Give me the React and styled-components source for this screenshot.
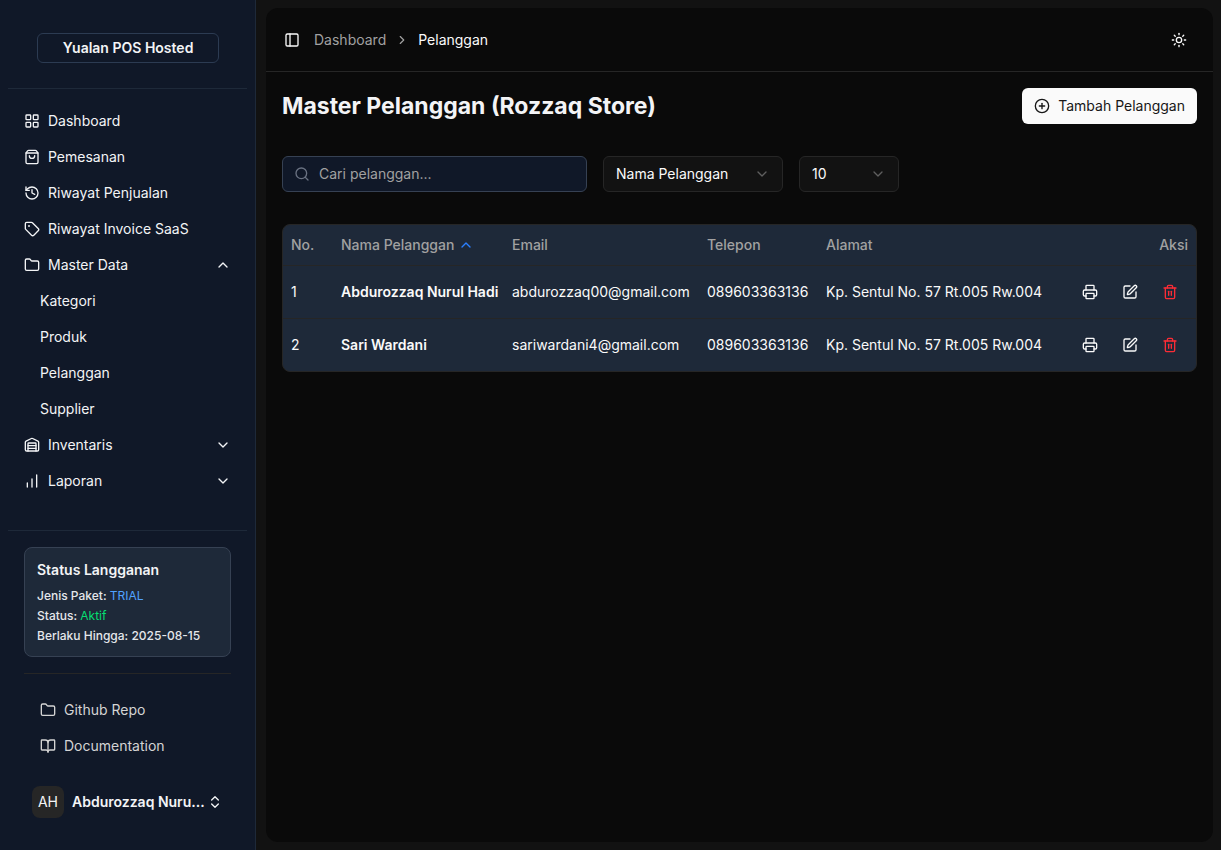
import React, { useState } from "react";
import styled, { createGlobalStyle } from "styled-components";
import {
  BookOpen,
  ChartNoAxesColumnIncreasing,
  ChevronDown,
  ChevronRight,
  ChevronsUpDown,
  ChevronUp,
  CirclePlus,
  Folder,
  History,
  LayoutGrid,
  PanelLeft,
  Printer,
  Search,
  ShoppingBag,
  SquarePen,
  Sun,
  Tag,
  Trash2,
  Warehouse,
} from "lucide-react";

const GlobalStyle = createGlobalStyle`
  :root {
    --color-page: #121212;
    --color-panel: #0a0a0a;
    --color-sidebar: #101828;
    --color-card: #1e2939;
    --color-line: #262626;
    --color-text: #fafafa;
    --color-muted: #a1a1a1;
    --color-blue: #2b7fff;
    --color-light-blue: #51a2ff;
    --color-green: #05df72;
    --color-red: #fb2c36;
  }
  * {
    box-sizing: border-box;
  }
  body {
    margin: 0;
    background: var(--color-page);
    color: var(--color-text);
    font-family: Inter, "Liberation Sans", sans-serif;
    font-size: 14px;
    line-height: 20px;
  }
  button, input, select {
    font: inherit;
    color: inherit;
  }
  button {
    cursor: pointer;
  }
  a {
    color: inherit;
    text-decoration: none;
  }
  svg {
    flex: none;
  }
`;

const Layout = styled.div`
  display: flex;
  min-height: 100vh;
`;

const Sidebar = styled.aside`
  display: flex;
  flex-direction: column;
  flex: none;
  width: 256px;
  padding: 8px;
  background: var(--color-sidebar);
  border-right: 1px solid var(--color-card);
  color: #f3f4f6;
`;

const SidebarHeader = styled.div`
  padding: 25px 28px 25px 29px;
  border-bottom: 1px solid var(--color-card);
`;

const Brand = styled.a`
  display: block;
  padding: 4px 8px;
  border: 1px solid #2c3b52;
  border-radius: 6px;
  text-align: center;
  font-weight: 600;
`;

const Nav = styled.nav`
  display: flex;
  flex-direction: column;
  flex: 1;
  gap: 4px;
  padding: 16px 8px;
`;

const NavItem = styled.a`
  display: flex;
  align-items: center;
  gap: 8px;
  height: 32px;
  padding: 0 8px;
`;

const NavGroup = styled.button`
  display: flex;
  align-items: center;
  gap: 8px;
  width: 100%;
  height: 32px;
  padding: 0 8px;
  border: 0;
  background: none;
  text-align: left;
  span {
    flex: 1;
  }
`;

const SubNav = styled.div`
  display: flex;
  flex-direction: column;
  gap: 4px;
  padding-left: 16px;
`;

const SidebarFooter = styled.div`
  border-top: 1px solid var(--color-card);
  padding: 16px;
`;

const StatusCard = styled.section`
  padding: 12px;
  background: var(--color-card);
  border: 1px solid #364153;
  border-radius: 8px;
  font-size: 12px;
  font-weight: 500;
  color: #e5e7eb;
  h2 {
    margin: 0 0 8px;
    font-size: 14px;
    line-height: 20px;
    font-weight: 600;
    color: #f3f4f6;
  }
  p {
    margin: 0;
    line-height: 16px;
  }
  p + p {
    margin-top: 4px;
  }
`;

const StatusValue = styled.span`
  color: ${(props) => props.$color};
  font-weight: 400;
`;

const FooterLinks = styled.div`
  display: flex;
  flex-direction: column;
  gap: 4px;
  margin-top: 16px;
  padding: 20px 8px 0;
  border-top: 1px solid var(--color-line);
  color: #d4d4d4;
`;

const UserButton = styled.button`
  display: flex;
  align-items: center;
  width: 100%;
  height: 48px;
  margin-top: 16px;
  padding: 8px;
  border: 0;
  background: none;
  text-align: left;
`;

const Avatar = styled.span`
  display: grid;
  place-items: center;
  flex: none;
  width: 32px;
  height: 32px;
  margin-right: 8px;
  border-radius: 8px;
  background: #262626;
`;

const UserName = styled.span`
  flex: 1;
  white-space: nowrap;
  font-weight: 600;
`;

const Main = styled.main`
  flex: 1;
  min-width: 0;
  margin: 8px 8px 8px 10px;
  background: var(--color-panel);
  border-radius: 12px;
`;

const TopBar = styled.header`
  display: flex;
  align-items: center;
  gap: 8px;
  height: 64px;
  padding: 0 16px 0 12px;
  border-bottom: 1px solid var(--color-line);
`;

const IconButton = styled.button`
  display: grid;
  place-items: center;
  width: ${(props) => props.$size}px;
  height: ${(props) => props.$size}px;
  padding: 0;
  border: 0;
  border-radius: 6px;
  background: none;
  color: ${(props) => props.$color || "inherit"};
`;

const Breadcrumb = styled.nav`
  display: flex;
  align-items: center;
  flex: 1;
  gap: 9px;
  color: var(--color-muted);
  [aria-current] {
    color: var(--color-text);
  }
`;

const Content = styled.div`
  padding: 16px;
`;

const TitleRow = styled.div`
  display: flex;
  align-items: center;
  justify-content: space-between;
  margin-bottom: 32px;
`;

const PageTitle = styled.h1`
  margin: 0;
  font-size: 23px;
  line-height: 32px;
  font-weight: 700;
  color: #f3f4f6;
`;

const AddButton = styled.button`
  display: flex;
  align-items: center;
  gap: 8px;
  height: 36px;
  padding: 0 12px;
  border: 0;
  border-radius: 6px;
  background: var(--color-text);
  color: #171717;
`;

const Filters = styled.div`
  display: flex;
  gap: 16px;
  margin-bottom: 32px;
`;

const SearchBox = styled.label`
  display: flex;
  align-items: center;
  gap: 9px;
  width: 305px;
  height: 36px;
  padding: 0 11px;
  border: 1px solid #364153;
  border-radius: 6px;
  background: var(--color-sidebar);
  color: #6a7282;
  input {
    flex: 1;
    min-width: 0;
    padding: 0;
    border: 0;
    outline: 0;
    background: none;
    color: var(--color-text);
  }
  input::placeholder {
    color: #a1a1a1;
  }
`;

const SelectBox = styled.div`
  position: relative;
  width: ${(props) => props.$width}px;
  select {
    width: 100%;
    height: 36px;
    padding: 0 12px;
    appearance: none;
    border: 1px solid var(--color-line);
    border-radius: 6px;
    background: var(--color-page);
  }
  svg {
    position: absolute;
    top: 10px;
    right: 13px;
    color: #5f5f5f;
    pointer-events: none;
  }
`;

const TableWrap = styled.div`
  overflow: hidden;
  background: var(--color-card);
  border: 1px solid var(--color-line);
  border-radius: 8px;
`;

const Table = styled.table`
  width: 100%;
  table-layout: fixed;
  border-collapse: collapse;
  text-align: left;
  white-space: nowrap;
  th {
    height: 40px;
    padding: 0 8px;
    font-weight: 500;
    color: var(--color-muted);
  }
  td {
    padding: 8px;
  }
  tbody tr {
    border-top: 1px solid var(--color-line);
  }
  .name {
    font-weight: 600;
  }
  .align-right {
    text-align: right;
  }
`;

const SortButton = styled.button`
  display: flex;
  align-items: center;
  gap: 4px;
  padding: 0;
  border: 0;
  background: none;
  svg {
    color: var(--color-blue);
  }
`;

const Actions = styled.div`
  display: flex;
  justify-content: flex-end;
  gap: 4px;
`;

const mainLinks = [
  { label: "Dashboard", icon: LayoutGrid },
  { label: "Pemesanan", icon: ShoppingBag },
  { label: "Riwayat Penjualan", icon: History },
  { label: "Riwayat Invoice SaaS", icon: Tag },
];

const groups = [
  { label: "Master Data", icon: Folder, items: ["Kategori", "Produk", "Pelanggan", "Supplier"] },
  { label: "Inventaris", icon: Warehouse, items: [] },
  { label: "Laporan", icon: ChartNoAxesColumnIncreasing, items: [] },
];

const customers = [
  {
    id: 1,
    name: "Abdurozzaq Nurul Hadi",
    email: "abdurozzaq00@gmail.com",
    phone: "089603363136",
    address: "Kp. Sentul No. 57 Rt.005 Rw.004",
  },
  {
    id: 2,
    name: "Sari Wardani",
    email: "sariwardani4@gmail.com",
    phone: "089603363136",
    address: "Kp. Sentul No. 57 Rt.005 Rw.004",
  },
];

const shorten = (text, max) => (text.length > max ? `${text.slice(0, max)}...` : text);

const AppSidebar = () => {
  const [open, setOpen] = useState("Master Data");
  return (
    <Sidebar>
      <SidebarHeader>
        <Brand href="#">Yualan POS Hosted</Brand>
      </SidebarHeader>
      <Nav>
        {mainLinks.map(({ label, icon: Icon }) => (
          <NavItem href="#" key={label}>
            <Icon size={16} />
            {label}
          </NavItem>
        ))}
        {groups.map(({ label, icon: Icon, items }) => {
          const isOpen = open === label;
          return (
            <React.Fragment key={label}>
              <NavGroup aria-expanded={isOpen} onClick={() => setOpen(isOpen ? "" : label)}>
                <Icon size={16} />
                <span>{label}</span>
                {isOpen ? <ChevronUp size={16} /> : <ChevronDown size={16} />}
              </NavGroup>
              {isOpen && items.length > 0 && (
                <SubNav>
                  {items.map((item) => (
                    <NavItem href="#" key={item}>
                      {item}
                    </NavItem>
                  ))}
                </SubNav>
              )}
            </React.Fragment>
          );
        })}
      </Nav>
      <SidebarFooter>
        <StatusCard>
          <h2>Status Langganan</h2>
          <p>
            Jenis Paket: <StatusValue $color="var(--color-light-blue)">TRIAL</StatusValue>
          </p>
          <p>
            Status: <StatusValue $color="var(--color-green)">Aktif</StatusValue>
          </p>
          <p>Berlaku Hingga: 2025-08-15</p>
        </StatusCard>
        <FooterLinks>
          <NavItem href="#">
            <Folder size={16} />
            Github Repo
          </NavItem>
          <NavItem href="#">
            <BookOpen size={16} />
            Documentation
          </NavItem>
        </FooterLinks>
        <UserButton>
          <Avatar>AH</Avatar>
          <UserName>{shorten("Abdurozzaq Nurul Hadi", 15)}</UserName>
          <ChevronsUpDown size={16} />
        </UserButton>
      </SidebarFooter>
    </Sidebar>
  );
};

const CustomerTable = ({ rows }) => (
  <TableWrap>
    <Table>
      <colgroup>
        <col width="50" />
        <col width="171" />
        <col width="195" />
        <col width="119" />
        <col />
        <col width="132" />
      </colgroup>
      <thead>
        <tr>
          <th>No.</th>
          <th>
            <SortButton>
              Nama Pelanggan
              <ChevronUp size={16} />
            </SortButton>
          </th>
          <th>Email</th>
          <th>Telepon</th>
          <th>Alamat</th>
          <th className="align-right">Aksi</th>
        </tr>
      </thead>
      <tbody>
        {rows.map((row, index) => (
          <tr key={row.id}>
            <td>{index + 1}</td>
            <td className="name">{row.name}</td>
            <td>{row.email}</td>
            <td>{row.phone}</td>
            <td>{row.address}</td>
            <td>
              <Actions>
                <IconButton $size={36} aria-label="Cetak">
                  <Printer size={16} />
                </IconButton>
                <IconButton $size={36} aria-label="Ubah">
                  <SquarePen size={16} />
                </IconButton>
                <IconButton $size={36} $color="var(--color-red)" aria-label="Hapus">
                  <Trash2 size={16} />
                </IconButton>
              </Actions>
            </td>
          </tr>
        ))}
      </tbody>
    </Table>
  </TableWrap>
);

const App = () => {
  const [search, setSearch] = useState("");
  const rows = customers.filter((c) => c.name.toLowerCase().includes(search.toLowerCase()));
  return (
    <Layout>
      <GlobalStyle />
      <AppSidebar />
      <Main>
        <TopBar>
          <IconButton $size={28} aria-label="Toggle sidebar">
            <PanelLeft size={16} />
          </IconButton>
          <Breadcrumb>
            <a href="#">Dashboard</a>
            <ChevronRight size={14} />
            <span aria-current="page">Pelanggan</span>
          </Breadcrumb>
          <IconButton $size={36} aria-label="Tema">
            <Sun size={16} />
          </IconButton>
        </TopBar>
        <Content>
          <TitleRow>
            <PageTitle>Master Pelanggan (Rozzaq Store)</PageTitle>
            <AddButton>
              <CirclePlus size={16} />
              Tambah Pelanggan
            </AddButton>
          </TitleRow>
          <Filters>
            <SearchBox>
              <Search size={16} />
              <input
                aria-label="Cari pelanggan"
                placeholder="Cari pelanggan..."
                value={search}
                onChange={(e) => setSearch(e.target.value)}
              />
            </SearchBox>
            <SelectBox $width={180}>
              <select aria-label="Kolom">
                <option>Nama Pelanggan</option>
                <option>Email</option>
                <option>Telepon</option>
              </select>
              <ChevronDown size={16} />
            </SelectBox>
            <SelectBox $width={100}>
              <select aria-label="Jumlah baris">
                <option>10</option>
                <option>25</option>
                <option>50</option>
              </select>
              <ChevronDown size={16} />
            </SelectBox>
          </Filters>
          <CustomerTable rows={rows} />
        </Content>
      </Main>
    </Layout>
  );
};

export default App;
